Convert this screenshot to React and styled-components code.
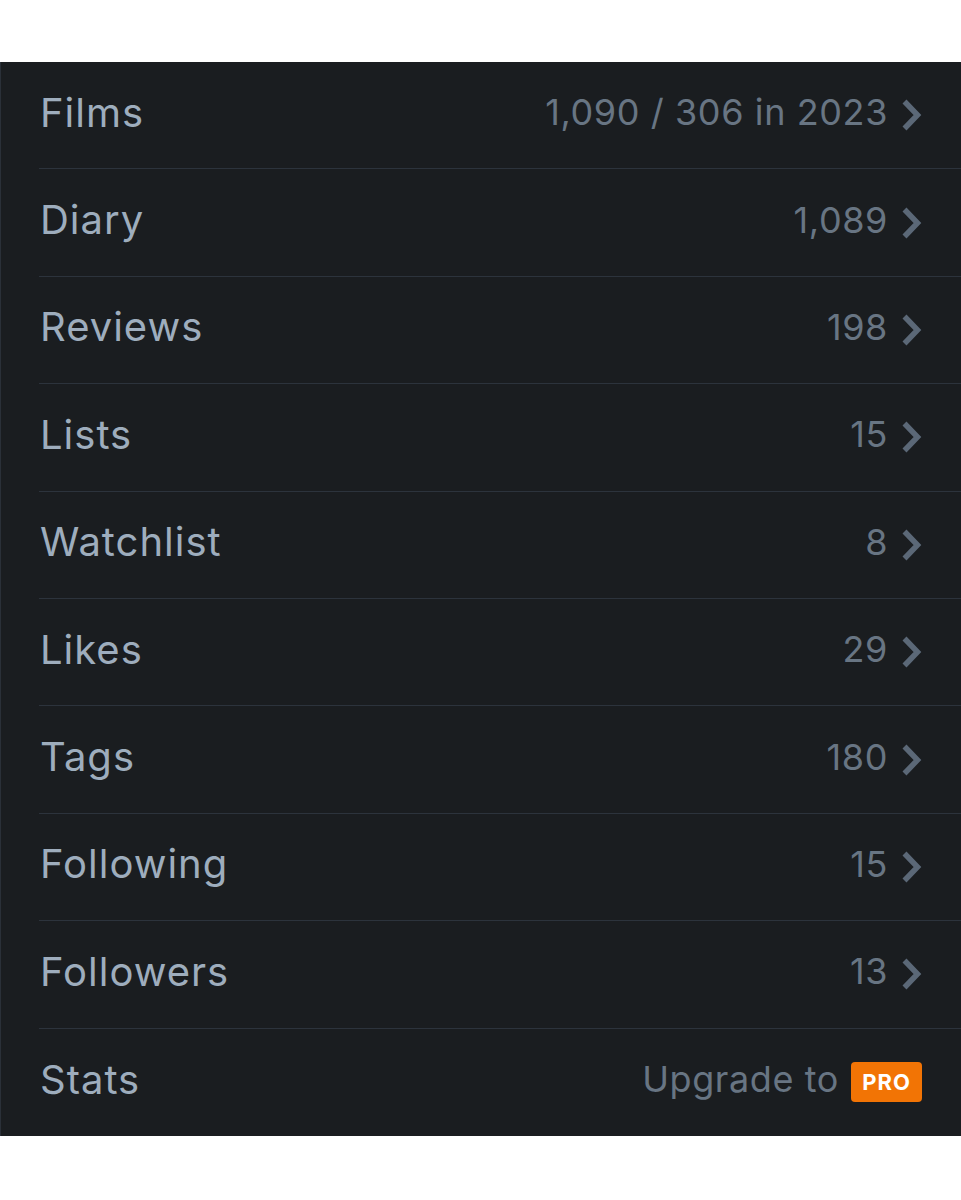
import React from "react";
import styled, { createGlobalStyle } from "styled-components";

const GlobalStyle = createGlobalStyle`
  html, body {
    margin: 0;
    padding: 0;
    background: #ffffff;
  }
  body {
    font-family: Inter, "Liberation Sans", sans-serif;
  }
`;

const Page = styled.div`
  padding-top: 62px;
  width: 961px;
`;

const Panel = styled.div`
  background-color: #1a1d20;
  border-left: 1px solid #2a3038;
  padding-left: 38px;
`;

const Row = styled.div`
  display: flex;
  align-items: center;
  justify-content: space-between;
  height: 107.4px;
  box-sizing: border-box;
  padding: 0 39px 6px 1px;
  border-bottom: ${(props) => (props.$last ? "none" : "1px solid #2c333c")};
`;

const Label = styled.span`
  font-size: 40px;
  color: #9eadbd;
  letter-spacing: 1px;
`;

const Right = styled.div`
  display: flex;
  align-items: center;
  gap: ${(props) => (props.$badge ? "12px" : "13px")};
`;

const Value = styled.span`
  font-size: 36px;
  color: #687583;
  letter-spacing: 0.6px;
`;

const Chevron = styled.svg`
  width: 21px;
  height: 34px;
  display: block;
  margin-top: 6px;
`;

const Badge = styled.span`
  display: inline-flex;
  align-items: center;
  justify-content: center;
  background-color: #f27405;
  color: #ffffff;
  font-weight: 700;
  font-size: 22px;
  letter-spacing: 1px;
  width: 71px;
  height: 40px;
  border-radius: 4px;
  margin-top: 6px;
`;

const rows = [
  { label: "Films", value: "1,090 / 306 in 2023" },
  { label: "Diary", value: "1,089" },
  { label: "Reviews", value: "198" },
  { label: "Lists", value: "15" },
  { label: "Watchlist", value: "8" },
  { label: "Likes", value: "29" },
  { label: "Tags", value: "180" },
  { label: "Following", value: "15" },
  { label: "Followers", value: "13" },
];

function ChevronIcon() {
  return (
    <Chevron viewBox="0 0 21 34">
      <path
        d="M3.5 3.5 L16.5 17 L3.5 30.5"
        fill="none"
        stroke="#5b6877"
        strokeWidth="5.5"
        strokeLinecap="butt"
        strokeLinejoin="miter"
      />
    </Chevron>
  );
}

export default function App() {
  return (
    <Page>
      <GlobalStyle />
      <Panel>
        {rows.map((r) => (
          <Row key={r.label}>
            <Label>{r.label}</Label>
            <Right>
              <Value>{r.value}</Value>
              <ChevronIcon />
            </Right>
          </Row>
        ))}
        <Row $last>
          <Label>Stats</Label>
          <Right $badge>
            <Value>Upgrade to</Value>
            <Badge>PRO</Badge>
          </Right>
        </Row>
      </Panel>
    </Page>
  );
}
